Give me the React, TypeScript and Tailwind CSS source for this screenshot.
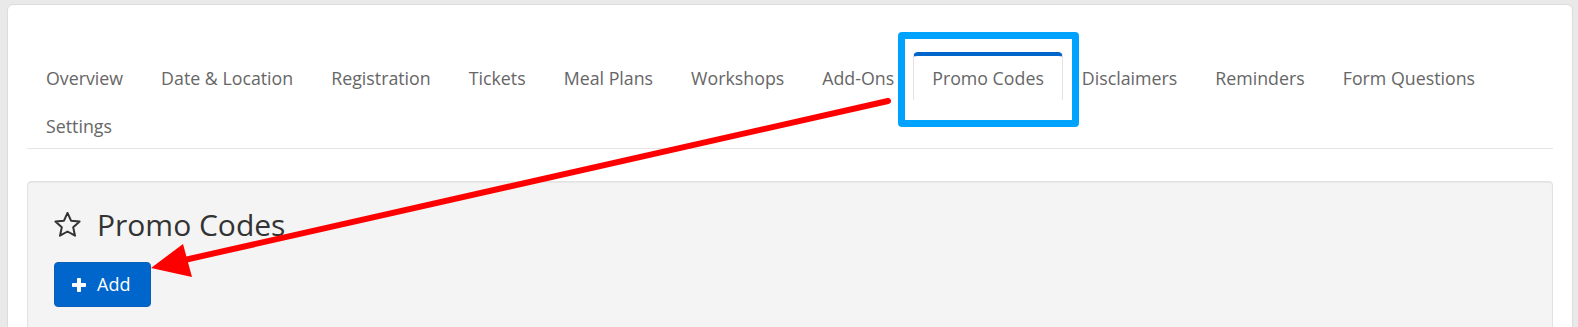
const tabs = [
  "Overview",
  "Date & Location",
  "Registration",
  "Tickets",
  "Meal Plans",
  "Workshops",
  "Add-Ons",
  "Promo Codes",
  "Disclaimers",
  "Reminders",
  "Form Questions",
  "Settings",
];

function StarIcon() {
  return (
    <svg width="27" height="25" viewBox="0 0 27 25" className="shrink-0">
      <polygon
        points="13.5,0.9 17.03,8.65 25.6,9.55 19.21,15.35 21.0,23.7 13.5,19.5 6.0,23.7 7.79,15.35 1.4,9.55 9.97,8.65"
        fill="none"
        stroke="#333"
        strokeWidth="2"
        strokeLinejoin="round"
      />
    </svg>
  );
}

function PlusIcon() {
  return (
    <svg width="14" height="14" viewBox="0 0 14 14" className="shrink-0">
      <rect x="5" y="0" width="4" height="14" rx="0.8" fill="white" />
      <rect x="0" y="5" width="14" height="4" rx="0.8" fill="white" />
    </svg>
  );
}

export default function App() {
  return (
    <div className="relative h-[327px] overflow-hidden bg-[#e9e9e9] pl-[7px] pr-[5px] pt-[4px] font-['Open_Sans',sans-serif]">
      {/* card */}
      <div className="h-[400px] rounded-t-[6px] border border-[#dcdcdc] bg-white px-[19px] pt-[47px]">
        {/* tabs */}
        <ul className="flex flex-wrap border-b border-[#e4e4e4]">
          {tabs.map((t) => {
            const active = t === "Promo Codes";
            return (
              <li
                key={t}
                className={
                  active
                    ? "rounded-t-[5px] border-x border-t-4 border-x-[#e2e2e2] border-t-[#0066cc] bg-white px-[18px] pb-[10px] pt-[10px] text-[17.8px] leading-6 text-[#666]"
                    : "border-x border-t-4 border-transparent px-[18px] pb-[10px] pt-[10px] text-[17.8px] leading-6 text-[#666]"
                }
              >
                {t}
              </li>
            );
          })}
        </ul>

        {/* panel */}
        <div className="mt-[32px] h-[300px] rounded-[4px] border border-[#e2e2e2] bg-[#f4f4f4] px-[26px] pt-[26px] shadow-[inset_0_1px_1px_rgba(0,0,0,0.05)]">
          <h2 className="flex items-center gap-[16px] text-[30px] leading-[33px] text-[#333]">
            <StarIcon />
            <span>Promo Codes</span>
          </h2>
          <button className="mt-[21px] flex h-[45px] items-center gap-[11px] rounded-[4px] border border-[#0a5fb8] bg-[#0066cc] pl-[17px] pr-[20px] text-[18px] text-white">
            <PlusIcon />
            <span>Add</span>
          </button>
        </div>
      </div>

      {/* highlight box */}
      <div className="absolute left-[898px] top-[32px] h-[95px] w-[181px] rounded-[4px] border-[7px] border-[#00a2ff]" />

      {/* red arrow */}
      <svg className="pointer-events-none absolute left-0 top-0" width="1578" height="327">
        <line x1="888" y1="101" x2="180" y2="261" stroke="#ff0000" strokeWidth="6" strokeLinecap="round" />
        <polygon points="151,268 183,244 192,277" fill="#ff0000" />
      </svg>
    </div>
  );
}
